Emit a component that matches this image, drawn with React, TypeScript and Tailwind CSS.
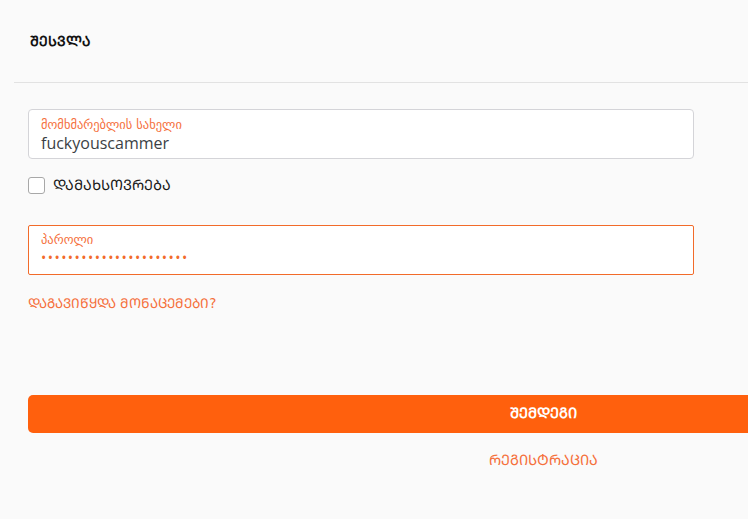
import React from 'react';

// Mkhedruli -> Mtavruli (capital Georgian)
const caps = (s: string) =>
  Array.from(s)
    .map((c) => {
      const code = c.charCodeAt(0);
      return code >= 0x10d0 && code <= 0x10fa ? String.fromCharCode(code + 0x0bc0) : c;
    })
    .join('');

const App: React.FC = () => {
  return (
    <div className="min-h-screen w-full overflow-hidden bg-[#fafafa] font-['DejaVu_Sans','Noto_Sans',sans-serif]">
      <div className="ml-[14px] h-[83px] flex items-center border-b border-[#e2e2e2] pl-[16px]">
        <h1 className="text-[14px] font-bold text-[#111]">{caps('შესვლა')}</h1>
      </div>

      <div className="w-[1058px] pl-[28px] pt-[26px]">
        <div className="w-[666px] h-[50px] rounded-[4px] border border-[#d4d4d8] bg-white px-[12px] pt-[6px]">
          <div className="text-[12.5px] leading-[17px] text-[#f5703c]">მომხმარებლის სახელი</div>
          <div className="text-[16px] leading-[21px] text-[#3b3f45] font-['Open_Sans',sans-serif]">fuckyouscammer</div>
        </div>

        <label className="mt-[16px] flex items-center gap-[8px]">
          <span className="w-[17px] h-[17px] rounded-[3px] border border-[#a8a8a8] bg-white" />
          <span className="text-[14.5px] text-[#1a1a1a]">{caps('დამახსოვრება')}</span>
        </label>

        <div className="mt-[28px] w-[666px] h-[50px] rounded-[2px] border border-[#f26b2a] bg-white px-[12px] pt-[5px]">
          <div className="text-[12.5px] leading-[17px] text-[#f5703c]">პაროლი</div>
          <div className="text-[14px] leading-[20px] tracking-[1.45px] text-[#f26b2a] font-['Open_Sans',sans-serif]">
            ••••••••••••••••••••••
          </div>
        </div>

        <a className="mt-[18px] block text-[13.5px] leading-[20px] text-[#f5703c]">{caps('დაგავიწყდა მონაცემები?')}</a>

        <button className="mt-[82px] w-full h-[38px] rounded-[5px] bg-[#ff600d] text-[14.5px] font-bold text-white">
          {caps('შემდეგი')}
        </button>

        <div className="mt-[17px] text-center text-[14.5px] text-[#f5703c]">{caps('რეგისტრაცია')}</div>
      </div>
    </div>
  );
};

export default App;
